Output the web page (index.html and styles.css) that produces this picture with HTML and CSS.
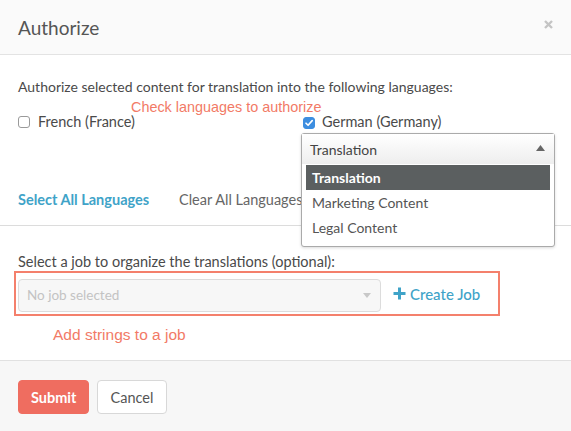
FILE: index.html
```html
<!DOCTYPE html>
<html>
<head>
<meta charset="utf-8">
<link rel="stylesheet" href="styles.css">
</head>
<body>
<div class="modal">
  <div class="header">
    <h1 class="title">Authorize</h1>
    <span class="close"><svg width="9" height="9" viewBox="0 0 9 9"><path d="M1 1L8 8M8 1L1 8" stroke="#c4c4c4" stroke-width="2.4"/></svg></span>
  </div>
  <div class="body">
    <p class="intro">Authorize selected content for translation into the following languages:</p>
    <div class="note note-langs">Check languages to authorize</div>
    <div class="langs">
      <div class="lang lang-fr">
        <span class="cb"></span>
        <span class="lang-label">French (France)</span>
      </div>
      <div class="lang lang-de">
        <div class="lang-row">
          <span class="cb cb-on"><svg width="10" height="10" viewBox="0 0 10 10"><path d="M2 5.2L4.1 7.3L8.2 2.6" fill="none" stroke="#fff" stroke-width="1.6" stroke-linecap="round" stroke-linejoin="round"/></svg></span>
          <span class="lang-label">German (Germany)</span>
        </div>
        <div class="dd">
          <div class="dd-head">
            <span>Translation</span>
            <svg width="9" height="6" viewBox="0 0 9 6"><path d="M0 6L4.5 0L9 6Z" fill="#666"/></svg>
          </div>
          <ul class="dd-list">
            <li class="dd-item active">Translation</li>
            <li class="dd-item">Marketing Content</li>
            <li class="dd-item">Legal Content</li>
          </ul>
        </div>
      </div>
    </div>
    <div class="links">
      <a class="link-select">Select All Languages</a>
      <a class="link-clear">Clear All Languages</a>
    </div>
  </div>
  <div class="section">
    <p class="job-label">Select a job to organize the translations (optional):</p>
    <div class="job-box">
      <div class="job-select">
        <span>No job selected</span>
        <svg width="8" height="5" viewBox="0 0 8 5"><path d="M0 0L8 0L4 5Z" fill="#c8c8c8"/></svg>
      </div>
      <a class="create">
        <svg width="13" height="13" viewBox="0 0 13 13"><path d="M6.5 0.5V12.5M0.5 6.5H12.5" stroke="#3fa3c8" stroke-width="3"/></svg>
        Create Job
      </a>
    </div>
    <div class="note note-job">Add strings to a job</div>
  </div>
  <div class="footer">
    <button class="btn btn-submit">Submit</button>
    <button class="btn btn-cancel">Cancel</button>
  </div>
</div>
</body>
</html>
```
FILE: styles.css
```css
* { box-sizing: border-box; }
html, body { margin: 0; padding: 0; }
body {
  width: 571px;
  height: 431px;
  overflow: hidden;
  background: #fff;
  font-family: Lato, "Open Sans", sans-serif;
  color: #4a4a4a;
}
.modal {
  display: flex;
  flex-direction: column;
  height: 431px;
}
.header {
  height: 55px;
  background: #fafafa;
  border-bottom: 1px solid #e3e3e3;
  display: flex;
  align-items: center;
  justify-content: space-between;
  padding: 0 18px 0 18px;
}
.title {
  margin: 0;
  font-size: 19px;
  font-weight: 400;
  color: #555;
  padding-top: 1px;
}
.close {
  display: flex;
  margin-top: -6px;
}
.body {
  padding: 22px 18px 0 18px;
  border-bottom: 1px solid #dcdcdc;
  height: 171px;
}
.intro {
  margin: 0;
  font-size: 14px;
  line-height: 20px;
  color: #4a4a4a;
}
.note {
  font-family: "Liberation Sans", Arial, sans-serif;
  color: #f27a66;
  font-size: 14.4px;
  line-height: 16px;
}
.note-langs {
  margin-left: 113px;
  margin-top: 2px;
  height: 13px;
}
.langs {
  display: flex;
  height: 68px;
}
.lang {
  display: flex;
  align-items: flex-start;
}
.lang-fr {
  width: 284px;
  padding-top: 1px;
}
.lang-de {
  flex-direction: column;
  position: relative;
  z-index: 2;
}
.lang-row {
  display: flex;
  align-items: center;
  padding-top: 1px;
}
.cb {
  width: 12px;
  height: 12px;
  border: 1px solid #9a9a9a;
  border-radius: 3px;
  background: #fff;
  margin-right: 8px;
  margin-top: 3px;
  display: flex;
  align-items: center;
  justify-content: center;
}
.lang-row .cb { margin-top: 1px; margin-left: 1px; margin-right: 7px; }
.cb-on {
  background: #3d8ee0;
  border-color: #3d8ee0;
}
.lang-label {
  font-size: 14.5px;
  line-height: 18px;
  color: #4a4a4a;
}
.dd {
  position: absolute;
  top: 21px;
  left: -1px;
  width: 254px;
  border: 1px solid #aaa;
  border-radius: 3px;
  background: #fff;
  box-shadow: 0 1px 3px rgba(0,0,0,0.15);
}
.dd-head {
  height: 30px;
  display: flex;
  align-items: center;
  justify-content: space-between;
  padding: 0 9px 0 8px;
  background: linear-gradient(#fff, #eee);
  font-size: 14px;
  color: #444;
}
.dd-head svg { margin-top: -2px; }
.dd-list {
  list-style: none;
  margin: 0;
  padding: 1px 4px 6px 4px;
}
.dd-item {
  height: 25px;
  line-height: 25px;
  padding-left: 6px;
  font-size: 14px;
  color: #555;
}
.dd-item.active {
  background: #5b5f60;
  color: #fff;
  font-weight: 700;
}
.links {
  display: flex;
  padding-top: 11px;
  font-size: 14.5px;
}
.link-select {
  color: #3fa3c8;
  font-weight: 700;
  width: 161px;
}
.link-clear {
  color: #666;
}
.section {
  padding: 26px 14px 0 14px;
  height: 134px;
}
.job-label {
  margin: 0 0 0 4px;
  font-size: 14.5px;
  line-height: 20px;
  color: #4a4a4a;
}
.job-box {
  width: 486px;
  height: 45px;
  border: 2px solid #f4806c;
  display: flex;
  align-items: center;
  padding: 0 0 0 2px;
  margin-top: -1px;
}
.job-select {
  width: 363px;
  height: 33px;
  border: 1px solid #dcdcdc;
  border-radius: 4px;
  background: #f7f7f7;
  display: flex;
  align-items: center;
  justify-content: space-between;
  padding: 0 9px 0 8px;
  font-size: 13.5px;
  color: #c3c3c3;
  margin-top: 3px;
}
.create {
  display: flex;
  align-items: center;
  gap: 4px;
  margin-left: 12px;
  color: #3fa3c8;
  font-size: 15px;
  font-weight: 500;
}
.note-job {
  margin-left: 39px;
  margin-top: 11px;
  font-size: 15.5px;
}
.footer {
  flex: 1;
  background: #f7f7f7;
  border-top: 1px solid #e1e1e1;
  display: flex;
  align-items: flex-start;
  gap: 8px;
  padding: 19px 18px 0 18px;
}
.btn {
  height: 34px;
  border-radius: 4px;
  font-family: Lato, "Open Sans", sans-serif;
  font-size: 14.5px;
  padding: 0 12px;
  cursor: pointer;
}
.btn-submit {
  width: 71px;
  background: #ef6d60;
  border: 1px solid #ef6d60;
  color: #fff;
  font-weight: 700;
}
.btn-cancel {
  width: 70px;
  background: #fff;
  border: 1px solid #d8d8d8;
  color: #555;
}
```
